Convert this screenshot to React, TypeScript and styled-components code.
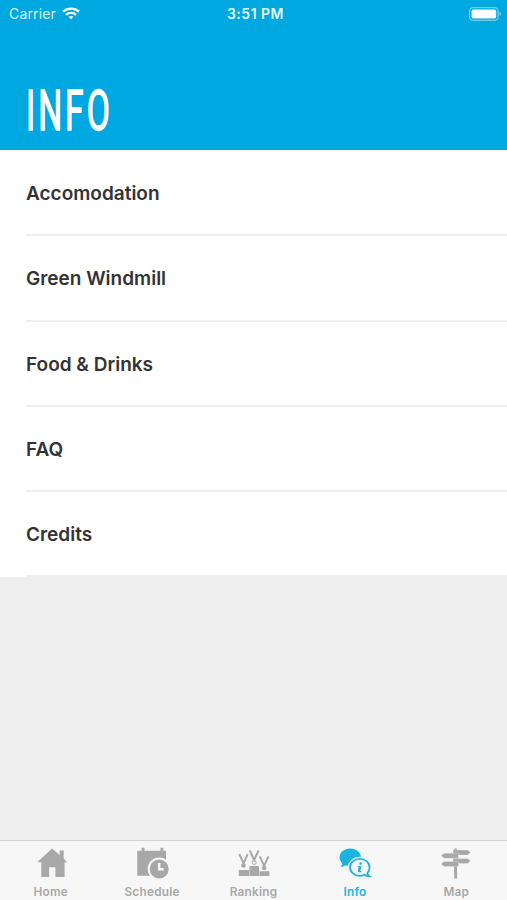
import React from "react";
import styled, { createGlobalStyle } from "styled-components";

const GlobalStyle = createGlobalStyle`
  *, *::before, *::after { box-sizing: border-box; }
  body { margin: 0; background: #eeeeee; font-family: Inter, Roboto, sans-serif; }
`;

const Screen = styled.div`
  display: flex;
  flex-direction: column;
  width: 100%;
  height: 900px;
  background: #eeeeee;
`;

const Header = styled.header`
  display: flex;
  flex-direction: column;
  justify-content: space-between;
  height: 150px;
  background: #00a8e2;
  color: #ffffff;
`;

const StatusBar = styled.div`
  display: grid;
  grid-template-columns: 1fr auto 1fr;
  align-items: center;
  height: 27px;
  padding: 0 5px 0 9px;
`;

const Carrier = styled.div`
  display: flex;
  align-items: center;
  gap: 6px;
  font-size: 14px;
  letter-spacing: 0.15px;
  color: #d9f4fd;
`;

const Clock = styled.div`
  font-size: 14px;
  font-weight: 600;
  letter-spacing: 0.5px;
  color: #e2f7fe;
`;

const BatterySlot = styled.div`
  display: flex;
  justify-content: flex-end;
`;

const Title = styled.h1`
  align-self: flex-start;
  margin: 0 0 11px 26px;
  font-family: Roboto, sans-serif;
  font-size: 56px;
  font-weight: 400;
  line-height: 56px;
  letter-spacing: 5px;
  -webkit-text-stroke: 1.5px #ffffff;
  transform: scaleX(0.6);
  transform-origin: left center;
`;

const List = styled.ul`
  margin: 0;
  padding: 1px 0 0;
  list-style: none;
  background: #ffffff;
`;

const ListItem = styled.li`
  display: flex;
  padding-left: 26px;
`;

const ItemLabel = styled.div`
  display: flex;
  flex: 1;
  align-items: center;
  height: 85.3px;
  padding-top: 2px;
  border-bottom: 2px solid #eeeeee;
  color: #333333;
  font-size: 19px;
  font-weight: 600;
  letter-spacing: 0;
`;

const TabBar = styled.nav`
  display: flex;
  height: 60px;
  margin-top: auto;
  border-top: 1px solid #d2d2d2;
  background: #f7f7f7;
`;

const Tab = styled.div<{ $active?: boolean }>`
  display: flex;
  flex: 1;
  flex-direction: column;
  align-items: center;
  padding-top: 5px;
  color: ${({ $active }) => ($active ? "#1cb4df" : "#a8a8a8")};
`;

const TabLabel = styled.span`
  margin-top: 6px;
  font-size: 11.8px;
  font-weight: 600;
  line-height: 15px;
  letter-spacing: 0.25px;
`;

const TabSvg = styled.svg`
  display: block;
  flex: none;
  width: 34px;
  height: 33px;
`;

const WifiIcon = () => (
  <svg width="18" height="13" viewBox="0 0 18 13" fill="none" stroke="#fff" strokeWidth="2.3">
    <path d="M1 4.7C5.5.5 12.5.5 17 4.7" />
    <path d="M4 7.9c2.9-2.7 7.1-2.7 10 0" />
    <path d="M6.6 9.8c1.4-1.2 3.4-1.2 4.8 0L9 12.3z" fill="#fff" stroke="none" />
  </svg>
);

const BatteryIcon = () => (
  <svg width="33" height="14" viewBox="0 0 33 14">
    <rect x="0.6" y="0.6" width="28.6" height="12.8" rx="3.6" fill="none" stroke="#72cff0" strokeWidth="1.2" />
    <rect x="2.6" y="2.6" width="24.6" height="8.8" rx="1.7" fill="#fff" />
    <path d="M30.5 4.8c2 .7 2 3.7 0 4.4z" fill="#72cff0" />
  </svg>
);

const HomeIcon = () => (
  <TabSvg viewBox="0 0 34 33" fill="currentColor">
    <path d="M18 2.6 25.7 9V4.4h4v8l3.3 3.9h-2.4v14.8h-9.2V21.3h-6.3v9.8H7.3V16.3H3.2z" />
  </TabSvg>
);

const ScheduleIcon = () => (
  <TabSvg viewBox="0 0 34 33" fill="currentColor">
    <path d="M2.2 4.7h4.4v-3h3v3h15.8v-3h3v3H31v25H2.2z" />
    <circle cx="24.2" cy="23" r="11.5" fill="#f7f7f7" />
    <circle cx="24.2" cy="23" r="9.5" />
    <path d="M24.2 17v6.3h4.4" fill="none" stroke="#f7f7f7" strokeWidth="2.4" />
  </TabSvg>
);

const RankingIcon = () => (
  <TabSvg viewBox="0 0 34 33" fill="currentColor">
    <path d="M1.8 24h10.2v6H1.8zM12.4 20H22v10h-9.6zM22.4 25.3h10V30h-10z" />
    <g fill="none" stroke="currentColor" strokeWidth="2">
      <path d="m2.3 8 4.2 9.4L10.7 8M12.7 4.3l4.4 9.7 4.5-9.7M22.8 10.3l4.3 9.5 4.4-9.5" />
      <circle cx="17.2" cy="16.5" r="2" strokeWidth="1" />
    </g>
    <circle cx="6.5" cy="19.5" r="2.3" />
    <circle cx="27.1" cy="22" r="2.3" />
  </TabSvg>
);

const InfoIcon = () => (
  <TabSvg viewBox="0 0 34 33" fill="currentColor">
    <path d="M12.2 2.5c6 0 10.7 3.6 10.7 8.7s-4.8 8.9-10.7 8.9c-1.8 0-3.3-.3-4.7-.9-1.4 1.1-3 1.8-5 1.9 1.3-1.1 1.8-2.4 1.7-3.8-1.8-1.6-2.6-3.6-2.6-6 0-5.1 4.7-8.8 10.6-8.8z" />
    <ellipse cx="21.8" cy="21.5" rx="12" ry="10.7" fill="#f7f7f7" />
    <path
      d="M21.8 12.9c5.5 0 9.8 3.7 9.8 8.5 0 2.1-.8 4.1-2.2 5.6 0 1.2.6 2.3 1.9 3.3-1.8 0-3.5-.6-4.7-1.6-1.5.7-3.1 1.1-4.8 1.1-5.5 0-9.8-3.8-9.8-8.5s4.3-8.4 9.8-8.4z"
      fill="none"
      stroke="currentColor"
      strokeWidth="1.8"
    />
    <circle cx="22.6" cy="17.6" r="1.3" />
    <path d="M20 19.9h3.5l-1.2 5.2h1.2l-.4 1.1h-3.6l1.2-5.2h-1z" />
  </TabSvg>
);

const MapIcon = () => (
  <TabSvg viewBox="0 0 34 33" fill="currentColor">
    <path d="M15.1 3.5q1.5-2.3 3 0v29h-3z" />
    <g stroke="#f7f7f7" strokeWidth="0.3">
      <path d="M14 4.1h14.6l3 2.5-3 2.5H14zM14 12.4h14.6l3 2.5-3 2.5H14z" />
      <path d="M19.5 7.3H5L2 9.8l3 2.5h14.5zM19.5 15.4H5l-3 2.5 3 2.5h14.5z" />
    </g>
  </TabSvg>
);

const items = ["Accomodation", "Green Windmill", "Food & Drinks", "FAQ", "Credits"];

const tabs = [
  { label: "Home", Icon: HomeIcon },
  { label: "Schedule", Icon: ScheduleIcon },
  { label: "Ranking", Icon: RankingIcon },
  { label: "Info", Icon: InfoIcon, active: true },
  { label: "Map", Icon: MapIcon },
];

export default function App() {
  return (
    <>
      <GlobalStyle />
      <Screen>
        <Header>
          <StatusBar>
            <Carrier>
              Carrier
              <WifiIcon />
            </Carrier>
            <Clock>3:51 PM</Clock>
            <BatterySlot>
              <BatteryIcon />
            </BatterySlot>
          </StatusBar>
          <Title>INFO</Title>
        </Header>
        <List>
          {items.map((item) => (
            <ListItem key={item}>
              <ItemLabel>{item}</ItemLabel>
            </ListItem>
          ))}
        </List>
        <TabBar>
          {tabs.map(({ label, Icon, active }) => (
            <Tab key={label} $active={active}>
              <Icon />
              <TabLabel>{label}</TabLabel>
            </Tab>
          ))}
        </TabBar>
      </Screen>
    </>
  );
}
